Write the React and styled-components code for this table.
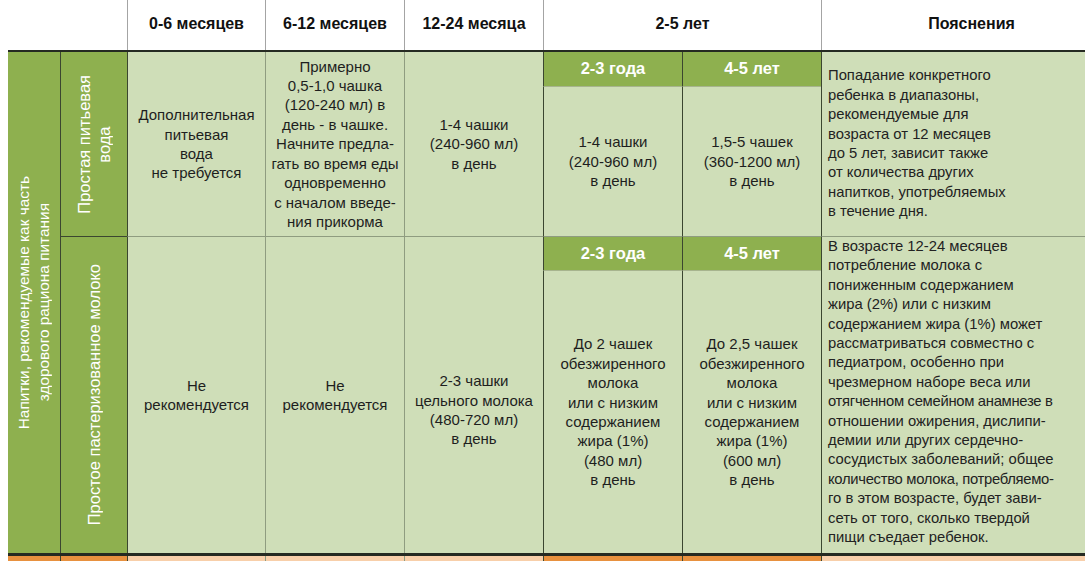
import React from "react";
import styled, { createGlobalStyle } from "styled-components";

const DARK_GREEN = "#8eb04f";
const LIGHT_GREEN = "#cfdeb8";
const DARK_LINE = "#3b4630";
const GREY_LINE = "#8f9c80";
const ORANGE = "#e8913f";
const PEACH = "#f8cfaa";

const Global = createGlobalStyle`
  html, body {
    margin: 0;
    padding: 0;
    background: #ffffff;
    overflow: hidden;
  }
  body {
    font-family: "Liberation Sans", Arial, sans-serif;
    color: #1e1e1e;
  }
`;

const Page = styled.div`
  width: 1085px;
  height: 561px;
  overflow: hidden;
  padding-left: 8px;
  box-sizing: border-box;
`;

const Table = styled.div`
  display: grid;
  grid-template-columns: 52px 67px 138px 139px 139px 139px 139px 300px;
  grid-template-rows: 50px 2px 35px 149px 35px 282px 3px 10px;
  width: 1113px;
  font-size: 15px;
  line-height: 19.4px;
`;

const Area = styled.div`
  grid-column: ${(p) => p.$col};
  grid-row: ${(p) => p.$row};
  box-sizing: border-box;
  min-width: 0;
  min-height: 0;
`;

const HeadCell = styled(Area)`
  display: flex;
  align-items: center;
  justify-content: center;
  padding-bottom: 2px;
  font-weight: bold;
  font-size: 16px;
  color: #111;
  background: #fff;
  border-left: ${(p) => (p.$edge ? "1px solid #a4a4a4" : "none")};
`;

const Rule = styled(Area)`
  background: #252a22;
`;

const GroupLabel = styled(Area)`
  background: ${DARK_GREEN};
  display: flex;
  align-items: center;
  justify-content: center;
  color: #fff;
  font-size: 15.4px;
`;

const RowLabel = styled(GroupLabel)`
  font-size: 16.5px;
  border-left: 1px solid ${DARK_LINE};
  border-top: ${(p) => (p.$top ? `1px solid ${DARK_LINE}` : "none")};
`;

const Vertical = styled.span`
  writing-mode: vertical-rl;
  transform: rotate(180deg);
  text-align: center;
  white-space: nowrap;
  line-height: 20px;
`;

const DataCell = styled(Area)`
  background: ${LIGHT_GREEN};
  display: flex;
  align-items: center;
  justify-content: center;
  text-align: center;
  white-space: nowrap;
  padding-top: ${(p) => p.$shift || 0}px;
  border-left: 1px solid ${(p) => (p.$dark ? DARK_LINE : GREY_LINE)};
  border-top: ${(p) => (p.$top ? `1px solid ${GREY_LINE}` : "none")};
`;

const SubHead = styled(Area)`
  background: ${DARK_GREEN};
  color: #fff;
  font-weight: bold;
  font-size: 16.5px;
  display: flex;
  align-items: center;
  justify-content: center;
  border-left: 1px solid ${DARK_LINE};
  border-top: ${(p) => (p.$top ? `1px solid ${GREY_LINE}` : "none")};
  border-bottom: 1px solid #a7b48e;
`;

const NoteCell = styled(Area)`
  background: ${LIGHT_GREEN};
  display: flex;
  align-items: ${(p) => (p.$top ? "flex-start" : "center")};
  padding-left: 6px;
  white-space: nowrap;
  font-size: 14.8px;
  color: #222;
  border-left: 1px solid ${DARK_LINE};
  border-top: ${(p) => (p.$top ? `1px solid ${GREY_LINE}` : "none")};
`;

const Tight = styled.span`
  letter-spacing: -0.3px;
`;

const StripCell = styled(Area)`
  background: ${(p) => (p.$warm ? ORANGE : PEACH)};
  border-left: ${(p) => (p.$line ? `1px solid ${p.$line}` : "none")};
`;

const Lines = ({ items }) => (
  <div>
    {items.map((t, i) => (
      <React.Fragment key={i}>
        {t}
        {i < items.length - 1 && <br />}
      </React.Fragment>
    ))}
  </div>
);

export default function App() {
  return (
    <Page>
      <Global />
      <Table>
        <HeadCell $col="1 / 3" $row="1" />
        <HeadCell $col="3" $row="1" $edge>0-6 месяцев</HeadCell>
        <HeadCell $col="4" $row="1" $edge>6-12 месяцев</HeadCell>
        <HeadCell $col="5" $row="1" $edge>12-24 месяца</HeadCell>
        <HeadCell $col="6 / 8" $row="1" $edge>2-5 лет</HeadCell>
        <HeadCell $col="8" $row="1" $edge>Пояснения</HeadCell>

        <Rule $col="1 / -1" $row="2" />

        <GroupLabel $col="1" $row="3 / 7">
          <Vertical>
            Напитки, рекомендуемые как часть
            <br />
            здорового рациона питания
          </Vertical>
        </GroupLabel>

        <RowLabel $col="2" $row="3 / 5">
          <Vertical>
            Простая питьевая
            <br />
            вода
          </Vertical>
        </RowLabel>

        <DataCell $col="3" $row="3 / 5" $dark>
          <Lines items={["Дополнительная", "питьевая", "вода", "не требуется"]} />
        </DataCell>
        <DataCell $col="4" $row="3 / 5">
          <Lines
            items={[
              "Примерно",
              "0,5-1,0 чашка",
              "(120-240 мл) в",
              "день - в чашке.",
              "Начните предла-",
              "гать во время еды",
              "одновременно",
              "с началом введе-",
              "ния прикорма",
            ]}
          />
        </DataCell>
        <DataCell $col="5" $row="3 / 5">
          <Lines items={["1-4 чашки", "(240-960 мл)", "в день"]} />
        </DataCell>
        <SubHead $col="6" $row="3">2-3 года</SubHead>
        <SubHead $col="7" $row="3">4-5 лет</SubHead>
        <DataCell $col="6" $row="4" $dark>
          <Lines items={["1-4 чашки", "(240-960 мл)", "в день"]} />
        </DataCell>
        <DataCell $col="7" $row="4" $dark>
          <Lines items={["1,5-5 чашек", "(360-1200 мл)", "в день"]} />
        </DataCell>
        <NoteCell $col="8" $row="3 / 5">
          <Lines
            items={[
              "Попадание конкретного",
              "ребенка в диапазоны,",
              "рекомендуемые для",
              "возраста от 12 месяцев",
              "до 5 лет, зависит также",
              "от количества других",
              "напитков, употребляемых",
              "в течение дня.",
            ]}
          />
        </NoteCell>

        <RowLabel $col="2" $row="5 / 7" $top>
          <Vertical>Простое пастеризованное молоко</Vertical>
        </RowLabel>
        <DataCell $col="3" $row="5 / 7" $dark $top>
          <Lines items={["Не", "рекомендуется"]} />
        </DataCell>
        <DataCell $col="4" $row="5 / 7" $top>
          <Lines items={["Не", "рекомендуется"]} />
        </DataCell>
        <DataCell $col="5" $row="5 / 7" $top $shift={30}>
          <Lines items={["2-3 чашки", "цельного молока", "(480-720 мл)", "в день"]} />
        </DataCell>
        <SubHead $col="6" $row="5" $top>2-3 года</SubHead>
        <SubHead $col="7" $row="5" $top>4-5 лет</SubHead>
        <DataCell $col="6" $row="6" $dark>
          <Lines
            items={[
              "До 2 чашек",
              "обезжиренного",
              "молока",
              "или с низким",
              "содержанием",
              "жира (1%)",
              "(480 мл)",
              "в день",
            ]}
          />
        </DataCell>
        <DataCell $col="7" $row="6" $dark>
          <Lines
            items={[
              "До 2,5 чашек",
              "обезжиренного",
              "молока",
              "или с низким",
              "содержанием",
              "жира (1%)",
              "(600 мл)",
              "в день",
            ]}
          />
        </DataCell>
        <NoteCell $col="8" $row="5 / 7" $top>
          <Lines
            items={[
              "В возрасте 12-24 месяцев",
              "потребление молока с",
              "пониженным содержанием",
              "жира (2%) или с низким",
              "содержанием жира (1%) может",
              "рассматриваться совместно с",
              "педиатром, особенно при",
              "чрезмерном наборе веса или",
              <Tight>отягченном семейном анамнезе в</Tight>,
              "отношении ожирения, дислипи-",
              "демии или других сердечно-",
              "сосудистых заболеваний; общее",
              <Tight>количество молока, потребляемо-</Tight>,
              "го в этом возрасте, будет зави-",
              "сеть от того, сколько твердой",
              "пищи съедает ребенок.",
            ]}
          />
        </NoteCell>

        <Rule $col="1 / -1" $row="7" />

        <StripCell $col="1" $row="8" $warm />
        <StripCell $col="2" $row="8" $warm $line={DARK_LINE} />
        <StripCell $col="3" $row="8" $line={DARK_LINE} />
        <StripCell $col="4" $row="8" $line={GREY_LINE} />
        <StripCell $col="5" $row="8" $line={GREY_LINE} />
        <StripCell $col="6" $row="8" $warm $line={DARK_LINE} />
        <StripCell $col="7" $row="8" $warm $line={DARK_LINE} />
        <StripCell $col="8" $row="8" $line={DARK_LINE} />
      </Table>
    </Page>
  );
}
